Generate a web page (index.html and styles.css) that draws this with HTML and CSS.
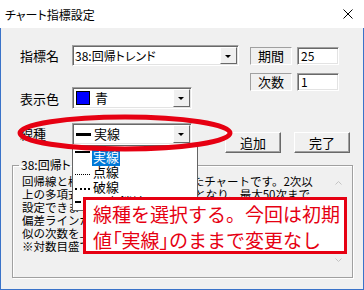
FILE: index.html
```html
<!DOCTYPE html>
<html lang="ja">

<head>
    <meta charset="UTF-8">
    <title>チャート指標設定</title>
    <link rel="stylesheet" href="styles.css">
</head>

<body>
    <div class="window">
        <!-- タイトルバー -->
        <div class="titlebar">
            <span class="title">チャート指標設定</span>
            <svg class="close" width="10" height="10" viewBox="0 0 10 10">
                <path d="M0.5 0.5L9.5 9.5M9.5 0.5L0.5 9.5" stroke="#000" stroke-width="1" fill="none" />
            </svg>
        </div>

        <div class="client">
            <div class="top">
                <div class="left">
                    <div class="row r1">
                        <span class="lbl">指標名</span>
                        <div class="combo wide"><span class="val">38:回帰トレンド</span><span class="arrow"></span></div>
                    </div>
                    <div class="row r2">
                        <span class="lbl">表示色</span>
                        <div class="combo"><span class="swatch"></span><span class="val big">青</span><span class="arrow"></span></div>
                    </div>
                </div>
                <div class="params">
                    <span class="plbl">期間</span><span class="edit">25</span>
                    <span class="plbl">次数</span><span class="edit">1</span>
                </div>
            </div>

            <div class="row r3">
                <span class="lbl">線種</span>
                <div class="combo"><span class="sample solid-thick"></span><span class="val big">実線</span><span class="arrow"></span></div>
                <button class="btn add">追加</button>
                <button class="btn done">完了</button>
            </div>

            <!-- 説明 -->
            <fieldset class="group">
                <legend>38:回帰トレンド</legend>
                <div class="desc">
                    <div class="desc-text">
                        <div>回帰線と標準偏差(±2σ)を表示したチャートです。2次以</div>
                        <div>上の多項式を指定すると回帰曲線となり、最大50次まで</div>
                        <div>設定できます。期間内の終値から求めた回帰線と</div>
                        <div>偏差ラインから価格の行き過ぎを判断します。近</div>
                        <div>似の次数を上げると価格の動きに近くなります。</div>
                        <div>※対数目盛では正しく表示されません。</div>
                    </div>
                    <div class="vscroll">
                        <svg width="7" height="4" viewBox="0 0 7 4"><path d="M0.5 3.5L3.5 0.5L6.5 3.5" stroke="#c4c4c4" fill="none" /></svg>
                        <svg width="7" height="4" viewBox="0 0 7 4"><path d="M0.5 0.5L3.5 3.5L6.5 0.5" stroke="#c4c4c4" fill="none" /></svg>
                    </div>
                </div>
            </fieldset>

            <!-- 開いたドロップダウン -->
            <div class="droplist">
                <div class="item"><span class="sample solid"></span><span class="sel">実線</span></div>
                <div class="item"><span class="sample dot"></span><span>点線</span></div>
                <div class="item"><span class="sample dash"></span><span>破線</span></div>
                <div class="item"><span class="sample dashdot"></span><span>一点鎖線</span></div>
            </div>

            <!-- 赤丸 -->
            <svg class="mark" width="364" height="262" viewBox="0 0 364 262">
                <ellipse cx="125" cy="105" rx="105" ry="16" fill="none" stroke="#e60012" stroke-width="5" />
            </svg>

            <!-- 注釈 -->
            <div class="callout">
                <div>線種を選択する。今回は初期</div>
                <div>値<span class="kakko">「</span>実線<span class="kakko">」</span>のままで変更なし</div>
            </div>
        </div>
    </div>
</body>

</html>
```

FILE: styles.css
```css
/* 全体 */
body {
    margin: 0;
    font-family: "Noto Sans CJK JP", "Liberation Sans", sans-serif;
    color: #000;
}

.window {
    position: relative;
    width: 364px;
    height: 290px;
    background: #f0f0f0;
    box-shadow: inset 0 0 0 1px #3a73c9;
    overflow: hidden;
}

/* タイトルバー */
.titlebar {
    height: 28px;
    background: #fff;
    display: flex;
    align-items: center;
    justify-content: space-between;
    padding: 0 11px 0 5px;
    font-size: 12px;
    font-feature-settings: "palt";
}

.client {
    position: relative;
    height: 262px;
}

.top {
    display: flex;
}

.left {
    padding: 17px 0 0 20px;
}

.row {
    display: flex;
    align-items: center;
}

.lbl {
    width: 52px;
    font-size: 13px;
}

.r1 {
    height: 21px;
}

.r2 {
    height: 22px;
    margin-top: 21px;
}

.r3 {
    margin: 14px 0 0 20px;
    align-items: flex-start;
}

.r3 .lbl {
    line-height: 22px;
}

/* コンボボックス */
.combo {
    display: flex;
    align-items: center;
    box-sizing: border-box;
    width: 120px;
    height: 22px;
    background: #fff;
    border: 1px solid;
    border-color: #a0a0a0 #fff #fff #a0a0a0;
    box-shadow: inset 1px 1px #696969, inset -1px -1px #e3e3e3;
    padding-left: 2px;
}

.r1 .combo {
    height: 21px;
}

.combo.wide {
    width: 167px;
}

.val {
    font-size: 12px;
    line-height: 14px;
    font-feature-settings: "palt";
}

.val.big {
    font-size: 13px;
}

.arrow {
    margin: 1px 1px 1px auto;
    align-self: stretch;
    width: 15px;
    background: #f0f0f0;
    border: 1px solid;
    border-color: #fff #696969 #696969 #fff;
    position: relative;
}

.arrow::after {
    content: "";
    position: absolute;
    left: 4px;
    top: 50%;
    margin-top: -1px;
    border: 3px solid transparent;
    border-top: 3px solid #000;
    border-bottom: 0;
}

.swatch {
    width: 12px;
    height: 12px;
    background: #0000ff;
    border: 1px solid #000;
    margin: 0 5px 0 1px;
}

/* 線のサンプル */
.sample {
    width: 15px;
    margin-right: 3px;
}

.solid-thick {
    border-top: 3px solid #000;
    margin-left: 1px;
}

.solid {
    border-top: 2px solid #000;
    align-self: flex-start;
    margin-top: 2px;
}

.dot {
    border-top: 1px dotted #000;
    margin-top: 6px;
}

.dash {
    border-top: 2px dotted #000;
    margin-top: 4px;
}

.dashdot {
    border-top: 2px solid #000;
    width: 6px;
    margin-right: 12px;
}

/* 期間・次数 */
.params {
    display: grid;
    grid-template-columns: 42px 42px;
    grid-auto-rows: 18px;
    column-gap: 5px;
    row-gap: 8px;
    margin: 19px 0 0 11px;
}

.plbl {
    border: 1px solid;
    border-color: #a0a0a0 #fff #fff #a0a0a0;
    font-size: 13px;
    line-height: 16px;
    text-align: center;
}

.edit {
    background: #fff;
    border: 1px solid;
    border-color: #a0a0a0 #fff #fff #a0a0a0;
    box-shadow: inset 1px 1px #696969, inset -1px -1px #e3e3e3;
    font-size: 12px;
    line-height: 16px;
    padding-left: 3px;
}

/* ボタン */
.btn {
    width: 56px;
    height: 21px;
    margin-top: 9px;
    padding: 0;
    background: #f0f0f0;
    border: 1px solid;
    border-color: #fff #696969 #696969 #fff;
    box-shadow: inset -1px -1px #a0a0a0;
    font-family: inherit;
    font-size: 13px;
    color: #000;
}

.add {
    margin-left: 33px;
}

.done {
    margin-left: 13px;
}

/* グループ */
.group {
    margin: 5px 11px 0 12px;
    padding: 0 0 5px;
    border: 1px solid #a0a0a0;
    box-shadow: inset 1px 1px #fff, 1px 1px #fff;
    min-width: 0;
}

.group legend {
    margin-left: 6px;
    padding: 0 2px;
    font-size: 12px;
    line-height: 14px;
    font-feature-settings: "palt";
}

.desc {
    display: flex;
    height: 100px;
    margin: 0 7px 0 5px;
}

.desc-text {
    flex: 1;
    overflow: hidden;
    padding: 3px 0 0 4px;
    font-size: 11.5px;
    line-height: 13px;
    white-space: nowrap;
}

.vscroll {
    width: 13px;
    display: flex;
    flex-direction: column;
    justify-content: space-between;
    align-items: center;
    padding: 9px 0 10px;
}

/* ドロップダウン */
.droplist {
    position: absolute;
    left: 72px;
    top: 117px;
    width: 126px;
    height: 66px;
    box-sizing: border-box;
    background: #fff;
    border: 1px solid #646464;
    padding: 3px 0 0 2px;
}

.item {
    display: flex;
    align-items: center;
    height: 15px;
    font-size: 13px;
}

.sel {
    background: #0078d7;
    color: #fff;
    padding: 0 1px;
    margin-left: -1px;
}

.mark {
    position: absolute;
    left: 0;
    top: 0;
    pointer-events: none;
}

/* 注釈 */
.callout {
    position: absolute;
    left: 83px;
    top: 169px;
    width: 264px;
    height: 57px;
    box-sizing: border-box;
    border: 3px solid #e60012;
    background: #fff;
    color: #e60012;
    font-size: 19px;
    line-height: 26px;
    padding: 1px 0 0 7px;
    white-space: nowrap;
}

.kakko {
    font-feature-settings: "palt";
}
```
